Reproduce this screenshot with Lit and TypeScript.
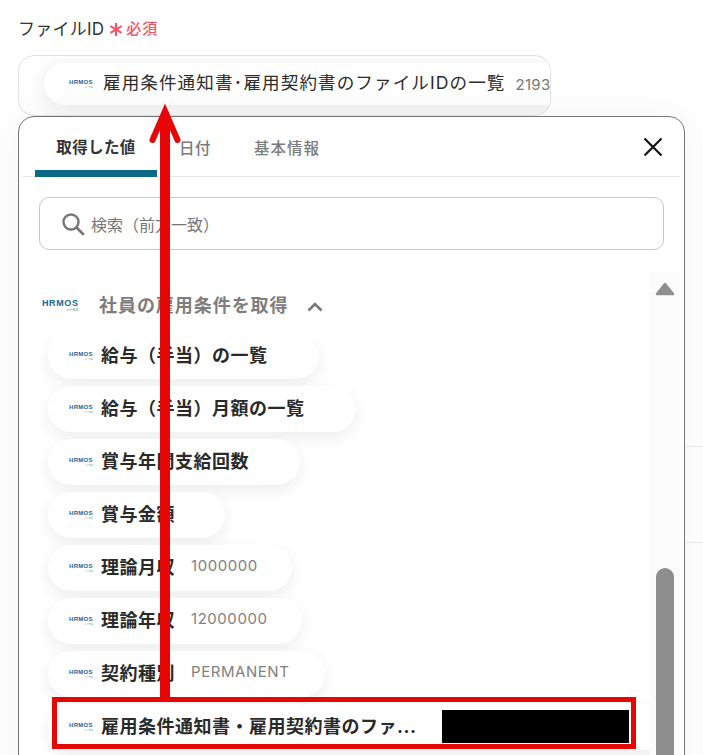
import { LitElement, html, css, nothing } from "lit";
import { customElement, property } from "lit/decorators.js";

@customElement("hr-logo")
class HrLogo extends LitElement {
  @property({ type: Boolean }) large = false;
  static styles = css`
    :host { display: inline-flex; flex: none; width: 23px; }
    :host([large]) { width: 36px; }
    .logo { display: flex; flex-direction: column; align-items: flex-end; color: #1d6491; font-family: "Liberation Sans", sans-serif; font-weight: 700; }
    .name { font-size: 6px; line-height: 7px; letter-spacing: 0.3px; white-space: nowrap; }
    .sub { font-size: 2px; line-height: 3px; opacity: 0.7; font-family: "Noto Sans CJK JP", sans-serif; white-space: nowrap; }
    .large .name { font-size: 9px; line-height: 9px; letter-spacing: 0.6px; }
    .large .sub { font-size: 3px; line-height: 4px; }
  `;
  render() {
    return html`<div class="logo ${this.large ? "large" : ""}"><span class="name">HRMOS</span><span class="sub">ハーモス</span></div>`;
  }
}

const ITEMS: { label: string; value?: string; w: number }[] = [
  { label: "給与（手当）の一覧", w: 271 },
  { label: "給与（手当）月額の一覧", w: 308 },
  { label: "賞与年間支給回数", w: 252 },
  { label: "賞与金額", w: 177 },
  { label: "理論月収", value: "1000000", w: 244 },
  { label: "理論年収", value: "12000000", w: 254 },
  { label: "契約種別", value: "PERMANENT", w: 277 },
];

@customElement("app-root")
class AppRoot extends LitElement {
  static styles = css`
    :host {
      display: block; position: relative; width: 703px; height: 755px; overflow: hidden; background: #fff;
      font-family: Inter, "Noto Sans CJK JP", sans-serif; color: #222;
    }
    .page { padding: 14px 0 0 18px; }
    .label { display: flex; align-items: center; height: 26px; font-size: 17px; letter-spacing: 0.25px; color: #333; }
    .star { display: flex; margin: 4px 3px 0 5px; }
    .req { color: #f4536a; font-size: 15px; font-weight: 500; letter-spacing: 1px; }
    .field {
      box-sizing: border-box; width: 533px; height: 61px; margin-top: 15px; border: 1px solid #e2e2e2;
      border-radius: 16px; padding: 7px 0 0 25px; overflow: hidden; background: #fff;
    }
    .field-pill {
      display: flex; align-items: center; width: 640px; height: 42px; border-radius: 21px; padding-left: 25px; box-sizing: border-box;
      background: #fff; box-shadow: 0 4px 24px rgba(0, 0, 0, 0.09); white-space: nowrap;
    }
    .field-text { margin-left: 11px; font-size: 17.6px; letter-spacing: 1.06px; color: #2c2c2c; padding-bottom: 5px; }
    .field-val { margin-left: 10px; font-size: 15px; letter-spacing: 0.3px; color: #777; }
    .panel {
      box-sizing: border-box; width: 667px; height: 700px; border: 1px solid #777; border-radius: 16px; background: #fff;
      box-shadow: 0 0 40px rgba(0, 0, 0, 0.05); padding: 0 4px; position: relative;
    }
    .tabs { display: flex; align-items: stretch; height: 59px; border-bottom: 1px solid #e6e6e6; padding-left: 12px; }
    .tab { display: flex; align-items: center; justify-content: center; height: 59px; box-sizing: border-box; font-size: 15.5px; letter-spacing: 0.4px; color: #7b7b7b; font-weight: 500; padding-top: 1px; }
    .tab.active { width: 122px; color: #333; font-weight: 700; border-bottom: 7px solid #0a6a85; border-radius: 7px 7px 0 0; margin-bottom: -1px; height: 60px; padding-top: 5px; }
    .tab.date { width: 76px; }
    .tab.basic { margin-left: 21px; letter-spacing: 1px; }
    .close { margin-left: auto; margin-right: 17px; align-self: center; display: flex; }
    .search {
      display: flex; align-items: center; box-sizing: border-box; width: 625px; height: 53px; margin: 20px 0 0 16px;
      border: 1px solid #c9c9c9; border-radius: 10px; padding-left: 21px; gap: 6px; font-size: 16px; color: #777;
    }
    .body { display: flex; margin-top: 22px; height: 500px; }
    .col { width: 627px; flex: none; overflow: hidden; }
    .head { display: flex; align-items: center; position: relative; z-index: 2; height: 66px; background: #fff; padding: 0 0 0 19px; }
    .head-t { margin-left: 21px; font-size: 18px; font-weight: 700; letter-spacing: 0.95px; color: #7d7d7d; padding-bottom: 2px; }
    .chev { margin-left: 18px; display: flex; margin-top: 3px; }
    .list { display: flex; flex-direction: column; gap: 7px; margin: -5px 0 0 25px; }
    .item {
      display: flex; align-items: center; box-sizing: border-box; height: 46px; border-radius: 23px; background: #fff; padding-left: 21px;
      box-shadow: 0 6px 16px rgba(0, 0, 0, 0.07); white-space: nowrap; flex: none;
    }
    .item.last { width: 640px; }
    .item-t { margin: 0 0 5px 9px; font-size: 18px; font-weight: 700; letter-spacing: 0.5px; color: #2a2a2a; }
    .item-v { margin: 0 0 5px 16px; font-size: 15px; letter-spacing: 0.55px; color: #7f7f7f; }
    .track { width: 30px; flex: none; background: #fcfcfc; display: flex; flex-direction: column; align-items: center; padding-top: 10px; box-sizing: border-box; }
    .track svg { flex: none; }
    .thumb { width: 18px; height: 204px; margin-top: 272px; border-radius: 9px 9px 0 0; background: #8e8e8e; flex: none; }
    .rule { position: absolute; left: 685px; right: 0; height: 1px; background: #e8e8e8; }
    .redact { position: absolute; z-index: 5; left: 442px; top: 710px; width: 187px; height: 33px; background: #000; }
    .hl { position: absolute; z-index: 5; left: 52px; top: 697px; width: 584px; height: 52px; box-sizing: border-box; border: 5px solid #e60606; }
    .arrow { position: absolute; z-index: 5; left: 140px; top: 100px; pointer-events: none; }
  `;

  logo(large = false) {
    return html`<hr-logo ?large=${large}></hr-logo>`;
  }

  render() {
    return html`
      <div class="page">
        <div class="label">ファイルID<span class="star"><svg width="14" height="15" viewBox="0 0 14 15"><path d="M7 1V14M1.4 4.2L12.6 10.8M12.6 4.2L1.4 10.8" stroke="#f4536a" stroke-width="2" fill="none"/></svg></span><span class="req">必須</span></div>
        <div class="field">
          <div class="field-pill">
            ${this.logo()}<span class="field-text">雇用条件通知書･雇用契約書のファイルIDの一覧</span><span class="field-val">21930000000</span>
          </div>
        </div>
        <div class="panel">
          <div class="tabs">
            <div class="tab active">取得した値</div>
            <div class="tab date">日付</div>
            <div class="tab basic">基本情報</div>
            <svg class="close" width="20" height="20" viewBox="0 0 20 20"><path d="M1.5 1.5L18.5 18.5M18.5 1.5L1.5 18.5" stroke="#111" stroke-width="2.2" fill="none"/></svg>
          </div>
          <div class="search">
            <svg width="24" height="24" viewBox="0 0 24 24"><circle cx="10" cy="10" r="7.5" fill="none" stroke="#777" stroke-width="2.4"/><path d="M15.5 15.5L22 22" stroke="#777" stroke-width="2.8" stroke-linecap="round"/></svg>
            <span>検索（前方一致）</span>
          </div>
          <div class="body">
            <div class="col">
              <div class="head">
                ${this.logo(true)}
                <span class="head-t">社員の雇用条件を取得</span>
                <span class="chev"><svg width="16" height="10" viewBox="0 0 16 10"><path d="M1.5 8.5L8 2L14.5 8.5" fill="none" stroke="#777" stroke-width="2.6"/></svg></span>
              </div>
              <div class="list">
                ${ITEMS.map(
                  (it) => html`<div class="item" style="width:${it.w}px">
                    ${this.logo()}<span class="item-t">${it.label}</span>
                    ${it.value ? html`<span class="item-v">${it.value}</span>` : nothing}
                  </div>`
                )}
                <div class="item last">${this.logo()}<span class="item-t">雇用条件通知書・雇用契約書のファ...</span></div>
              </div>
            </div>
            <div class="track">
              <svg width="20" height="14" viewBox="0 0 20 14"><path d="M10 2L18 12H2Z" fill="#8e8e8e" stroke="#8e8e8e" stroke-width="2.5" stroke-linejoin="round"/></svg>
              <div class="thumb"></div>
            </div>
          </div>
        </div>
      </div>
      <div class="rule" style="top:446px"></div>
      <div class="rule" style="top:542px"></div>
      <div class="redact"></div>
      <div class="hl"></div>
      <svg class="arrow" width="50" height="600" viewBox="0 0 50 600">
        <path d="M25 15V598" stroke="#e60606" stroke-width="10" fill="none"/>
        <path d="M12.5 40L25 11L37.5 40" stroke="#e60606" stroke-width="6" stroke-linecap="round" fill="none"/>
      </svg>
    `;
  }
}
